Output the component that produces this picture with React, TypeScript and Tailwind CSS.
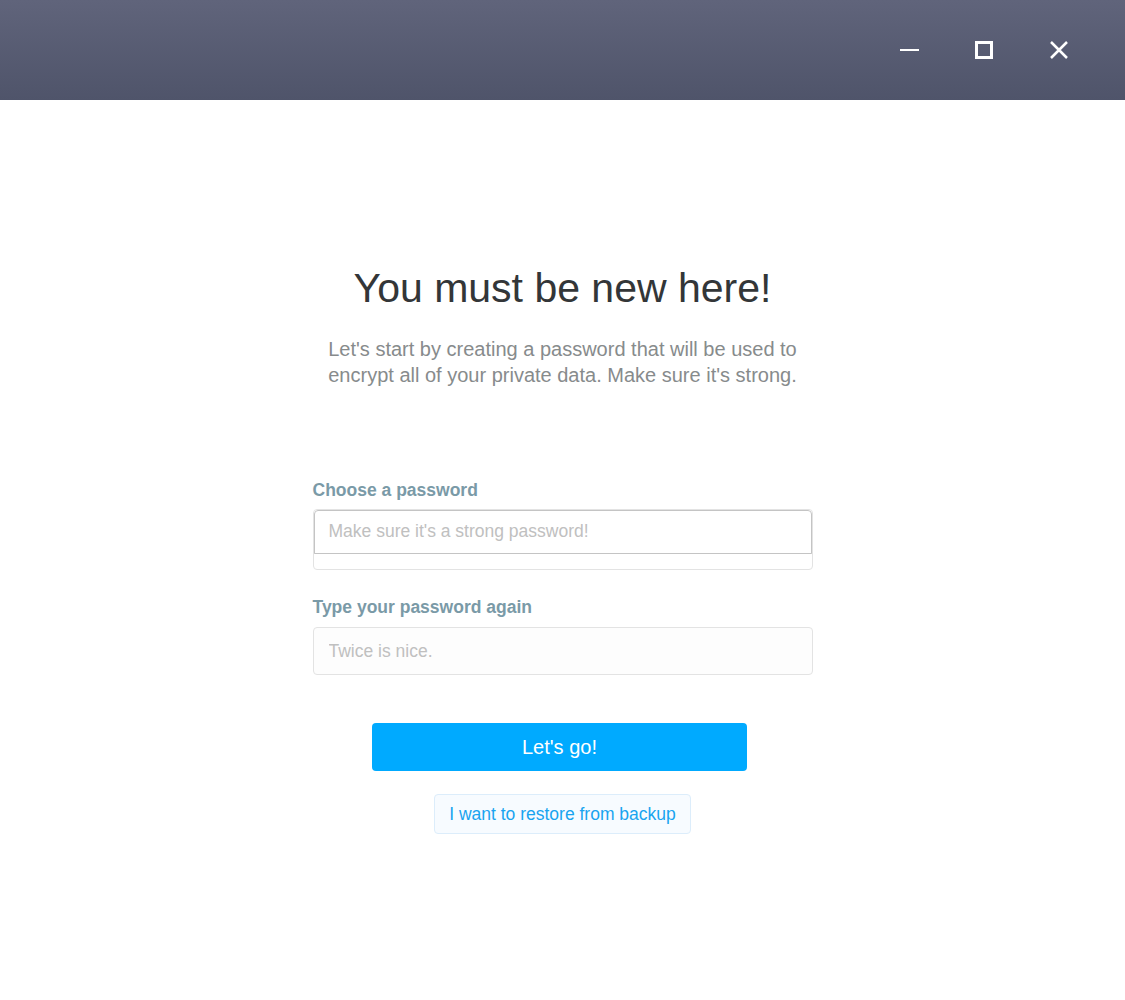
import React from 'react'

function TitleBar() {
    return (
        <div className="h-[100px] w-full bg-gradient-to-b from-[#60647b] to-[#4f546a] flex items-center justify-end pr-[56px] gap-[55px]">
            <button className="w-[20px] h-[20px] flex items-center justify-center">
                <span className="block w-[19px] h-[2px] bg-white" />
            </button>
            <button className="w-[20px] h-[20px] flex items-center justify-center">
                <span className="block w-[18px] h-[18px] border-[3px] border-white" />
            </button>
            <button className="w-[20px] h-[20px] flex items-center justify-center">
                <svg width="20" height="20" viewBox="0 0 20 20" fill="none" stroke="white" strokeWidth={2.5}>
                    <path d="M2 2 L18 18 M18 2 L2 18" />
                </svg>
            </button>
        </div>
    )
}

function App() {
    return (
        <div className="w-[1125px] h-[1000px] bg-white font-['Liberation_Sans',Arial,sans-serif]">
            <TitleBar />
            <div className="flex flex-col items-center pt-[164px]">
                <h1 className="text-[41px] leading-[48px] text-[#333638]">You must be new here!</h1>
                <p className="mt-[24px] text-[20px] leading-[26px] text-[#878b8c] text-center">
                    Let's start by creating a password that will be used to<br />
                    encrypt all of your private data. Make sure it's strong.
                </p>

                <div className="mt-[92px] w-[500px]">
                    <label className="block text-[17.5px] font-bold text-[#7a9aa7] leading-[20px]">
                        Choose a password
                    </label>
                    <div className="mt-[9px] rounded-[4px] border border-[#e3e3e3]">
                        <input
                            type="password"
                            placeholder="Make sure it's a strong password!"
                            className="block w-full h-[44px] rounded-t-[4px] border-b border-[#e3e3e3] outline outline-1 outline-[#c4c4c4] -outline-offset-1 bg-white px-[15px] text-[17.5px] text-[#333] placeholder:text-[#c0c0c0]"
                        />
                        <div className="h-[15px]" />
                    </div>

                    <label className="block mt-[27px] text-[17.5px] font-bold text-[#7a9aa7] leading-[20px]">
                        Type your password again
                    </label>
                    <input
                        type="password"
                        placeholder="Twice is nice."
                        className="mt-[10px] block w-full h-[48px] rounded-[4px] border border-[#e3e3e3] bg-[#fdfdfd] px-[15px] text-[17.5px] text-[#333] placeholder:text-[#c0c0c0]"
                    />
                </div>

                <button className="mt-[48px] mr-[6px] w-[375px] h-[48px] rounded-[4px] bg-[#00aaff] text-white text-[20px]">
                    Let's go!
                </button>
                <button className="mt-[23px] h-[40px] px-[14px] rounded-[4px] border border-[#dcedfb] bg-[#f7fbff] text-[#19a4f0] text-[17.5px]">
                    I want to restore from backup
                </button>
            </div>
        </div>
    )
}

export default App
